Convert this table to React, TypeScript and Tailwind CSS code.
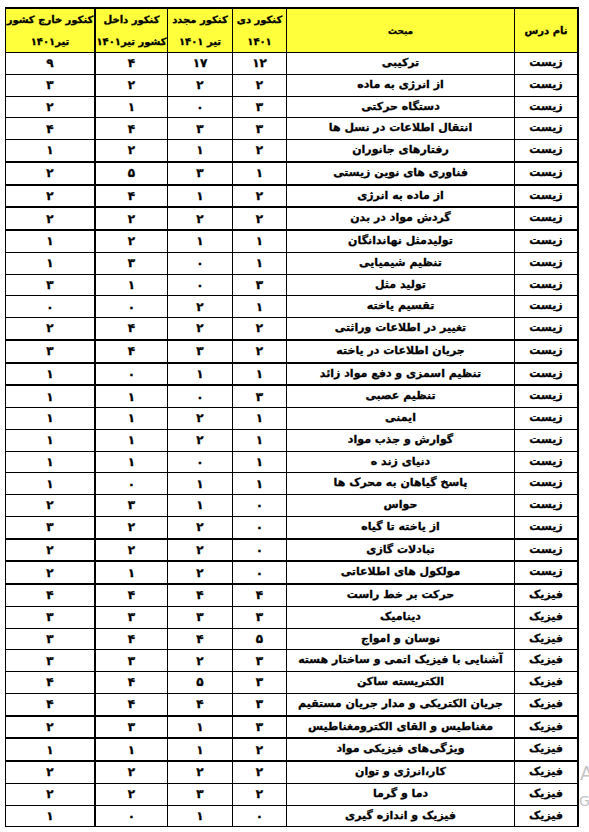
// Konkur topic breakdown table (Persian, RTL)

type Row = {
  subject: string
  topic: string
  dey: number
  mojadad: number
  dakhel: number
  kharej: number
}

const rows: Row[] = [
  { subject: "زیست", topic: "ترکیبی", dey: 12, mojadad: 17, dakhel: 4, kharej: 9 },
  { subject: "زیست", topic: "از انرژی به ماده", dey: 2, mojadad: 2, dakhel: 2, kharej: 3 },
  { subject: "زیست", topic: "دستگاه حرکتی", dey: 3, mojadad: 0, dakhel: 1, kharej: 2 },
  { subject: "زیست", topic: "انتقال اطلاعات در نسل ها", dey: 3, mojadad: 3, dakhel: 4, kharej: 4 },
  { subject: "زیست", topic: "رفتارهای جانوران", dey: 2, mojadad: 1, dakhel: 2, kharej: 1 },
  { subject: "زیست", topic: "فناوری های نوین زیستی", dey: 1, mojadad: 3, dakhel: 5, kharej: 2 },
  { subject: "زیست", topic: "از ماده به انرژی", dey: 2, mojadad: 1, dakhel: 4, kharej: 2 },
  { subject: "زیست", topic: "گردش مواد در بدن", dey: 2, mojadad: 2, dakhel: 2, kharej: 2 },
  { subject: "زیست", topic: "تولیدمثل نهاندانگان", dey: 1, mojadad: 1, dakhel: 2, kharej: 1 },
  { subject: "زیست", topic: "تنظیم شیمیایی", dey: 1, mojadad: 0, dakhel: 3, kharej: 1 },
  { subject: "زیست", topic: "تولید مثل", dey: 3, mojadad: 0, dakhel: 1, kharej: 3 },
  { subject: "زیست", topic: "تقسیم یاخته", dey: 1, mojadad: 2, dakhel: 0, kharej: 0 },
  { subject: "زیست", topic: "تغییر در اطلاعات وراثتی", dey: 2, mojadad: 2, dakhel: 4, kharej: 2 },
  { subject: "زیست", topic: "جریان اطلاعات در یاخته", dey: 2, mojadad: 3, dakhel: 4, kharej: 3 },
  { subject: "زیست", topic: "تنظیم اسمزی و دفع مواد زائد", dey: 1, mojadad: 1, dakhel: 0, kharej: 1 },
  { subject: "زیست", topic: "تنظیم عصبی", dey: 3, mojadad: 0, dakhel: 1, kharej: 1 },
  { subject: "زیست", topic: "ایمنی", dey: 1, mojadad: 2, dakhel: 1, kharej: 1 },
  { subject: "زیست", topic: "گوارش و جذب مواد", dey: 1, mojadad: 2, dakhel: 1, kharej: 1 },
  { subject: "زیست", topic: "دنیای زند ه", dey: 1, mojadad: 0, dakhel: 1, kharej: 1 },
  { subject: "زیست", topic: "پاسخ گیاهان به محرک ها", dey: 1, mojadad: 1, dakhel: 0, kharej: 1 },
  { subject: "زیست", topic: "حواس", dey: 0, mojadad: 1, dakhel: 3, kharej: 2 },
  { subject: "زیست", topic: "از یاخته تا گیاه", dey: 0, mojadad: 2, dakhel: 2, kharej: 3 },
  { subject: "زیست", topic: "تبادلات گازی", dey: 0, mojadad: 2, dakhel: 2, kharej: 2 },
  { subject: "زیست", topic: "مولکول های اطلاعاتی", dey: 0, mojadad: 2, dakhel: 1, kharej: 2 },
  { subject: "فیزیک", topic: "حرکت بر خط راست", dey: 4, mojadad: 4, dakhel: 4, kharej: 4 },
  { subject: "فیزیک", topic: "دینامیک", dey: 3, mojadad: 3, dakhel: 3, kharej: 3 },
  { subject: "فیزیک", topic: "نوسان و امواج", dey: 5, mojadad: 4, dakhel: 4, kharej: 3 },
  { subject: "فیزیک", topic: "آشنایی با فیزیک اتمی و ساختار هسته", dey: 3, mojadad: 2, dakhel: 3, kharej: 3 },
  { subject: "فیزیک", topic: "الکتریسته ساکن", dey: 3, mojadad: 5, dakhel: 4, kharej: 4 },
  { subject: "فیزیک", topic: "جریان الکتریکی و مدار جریان مستقیم", dey: 3, mojadad: 4, dakhel: 4, kharej: 4 },
  { subject: "فیزیک", topic: "مغناطیس و القای الکترومغناطیس", dey: 3, mojadad: 1, dakhel: 3, kharej: 2 },
  { subject: "فیزیک", topic: "ویژگی‌های فیزیکی مواد", dey: 2, mojadad: 1, dakhel: 1, kharej: 1 },
  { subject: "فیزیک", topic: "کار،انرژی و توان", dey: 2, mojadad: 2, dakhel: 2, kharej: 2 },
  { subject: "فیزیک", topic: "دما و گرما", dey: 2, mojadad: 3, dakhel: 2, kharej: 2 },
  { subject: "فیزیک", topic: "فیزیک و اندازه گیری", dey: 0, mojadad: 1, dakhel: 0, kharej: 1 },
]

// rows whose bottom line comes out heavier in the scan
const thick = new Set([4, 5, 6, 7, 12, 13, 14, 21, 22, 23, 29, 30, 31])

const faDigits = "۰۱۲۳۴۵۶۷۸۹"
const toFa = (n: number) =>
  String(n)
    .split("")
    .map((d) => faDigits[Number(d)])
    .join("")

export default function App() {
  return (
    <div className="relative w-[589px] h-[832px] overflow-hidden bg-white font-['DejaVu_Sans',sans-serif] font-bold text-black [-webkit-text-stroke:0.3px_black]">
      <div dir="rtl" className="ml-[5px] mt-[7px] w-[574px] border-t-[2px] border-r-[2px] border-l border-black">
        {/* Header */}
        <div className="flex h-[43px] bg-[#ffff3c] text-[10px] leading-[22px] text-center whitespace-nowrap">
          <div className="w-[63px] flex items-center justify-center border-l border-black">نام درس</div>
          <div className="w-[228px] flex items-center justify-center border-l border-black text-[9px]">مبحث</div>
          <div className="w-[54px] flex flex-col items-center justify-center border-l border-black">
            <span>کنکور دی</span>
            <span>{toFa(1401)}</span>
          </div>
          <div className="w-[65px] flex flex-col items-center justify-center border-l border-black">
            <span>کنکور مجدد</span>
            <span>تیر {toFa(1401)}</span>
          </div>
          <div className="w-[73px] flex flex-col items-center justify-center border-l-2 border-black">
            <span>کنکور داخل</span>
            <span>کشور تیر{toFa(1401)}</span>
          </div>
          <div className="flex-1 flex flex-col items-center justify-center">
            <span>کنکور خارج کشور</span>
            <span>تیر{toFa(1401)}</span>
          </div>
        </div>

        {/* Body */}
        <div className="flex flex-col h-[775px] border-t border-black text-[11px] whitespace-nowrap">
          {rows.map((r, i) => (
            <div
              key={i}
              className={`flex flex-1 min-h-0 border-black ${thick.has(i) ? "border-b-2" : "border-b"}`}
            >
              <div className="w-[63px] flex items-center justify-center border-l border-black">{r.subject}</div>
              <div className="w-[228px] flex items-center justify-center border-l border-black">{r.topic}</div>
              <div className="w-[54px] flex items-center justify-center border-l border-black text-[12px]">{toFa(r.dey)}</div>
              <div className="w-[65px] flex items-center justify-center border-l border-black text-[12px]">{toFa(r.mojadad)}</div>
              <div className="w-[73px] flex items-center justify-center border-l-2 border-black text-[12px]">{toFa(r.dakhel)}</div>
              <div className="flex-1 flex items-center justify-center text-[12px]">{toFa(r.kharej)}</div>
            </div>
          ))}
        </div>
      </div>

      {/* faint watermark letters cut off at the right edge */}
      <span className="absolute left-[580px] top-[759px] text-[19px] font-normal text-[#c4c4c4] [-webkit-text-stroke:0]">A</span>
      <span className="absolute left-[579px] top-[791px] text-[14px] font-normal text-[#c4c4c4] [-webkit-text-stroke:0]">G</span>
    </div>
  )
}
